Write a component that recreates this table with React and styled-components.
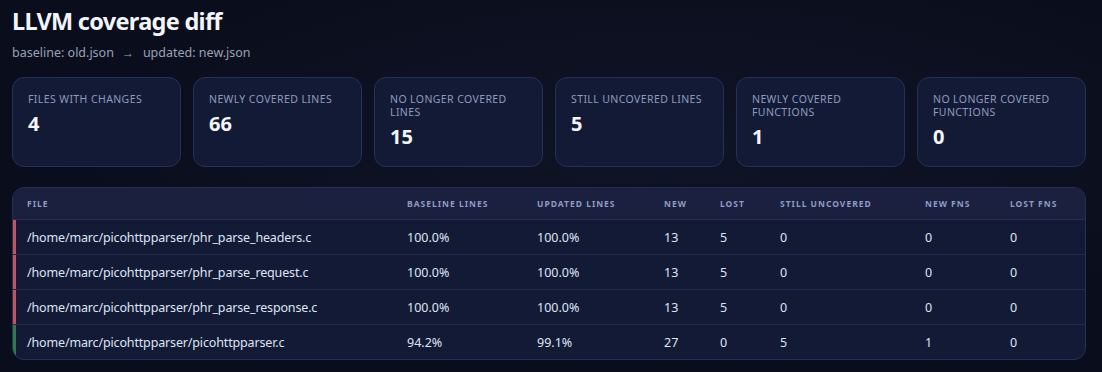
import React from 'react';
import styled, { createGlobalStyle } from 'styled-components';

const Global = createGlobalStyle`
  html, body {
    margin: 0;
    background: #0b0f1d;
  }
  body {
    font-family: 'Noto Sans', 'Open Sans', sans-serif;
    color: #e6eaf5;
  }
`;

const Page = styled.div`
  padding: 4px 16px 12px 12px;
  min-height: 372px;
  box-sizing: border-box;
  background: radial-gradient(ellipse at 60% 40%, #0f1426 0%, #0a0d1b 70%);
`;

const Title = styled.h1`
  margin: 0;
  font-size: 23.5px;
  font-weight: 700;
  letter-spacing: -0.7px;
  color: #f2f5fc;
  line-height: 34px;
`;

const Sub = styled.div`
  margin-top: 6px;
  font-size: 12.5px;
  color: #98a2b8;
  span { margin: 0 9px 0 8px; font-size: 12px; }
`;

const Cards = styled.div`
  display: grid;
  grid-template-columns: repeat(6, 1fr);
  gap: 12px;
  margin-top: 16px;
`;

const Card = styled.div`
  height: 90px;
  box-sizing: border-box;
  padding: 15px 15px 0;
  background: #131a35;
  border: 1px solid #253059;
  border-radius: 12px;
`;

const Label = styled.div`
  font-size: 10.5px;
  letter-spacing: 0.4px;
  line-height: 13px;
  text-transform: uppercase;
  color: #8d9bbf;
`;

const Value = styled.div`
  margin-top: 4px;
  font-size: 20px;
  font-weight: 700;
  color: #f4f6fc;
`;

const TableWrap = styled.div`
  margin-top: 20px;
  border: 1px solid #253059;
  border-radius: 12px;
  overflow: hidden;
  background: #131a35;
`;

const Table = styled.table`
  width: 100%;
  border-collapse: collapse;
  table-layout: fixed;
  font-size: 12.5px;
`;

const Th = styled.th`
  text-align: left;
  font-size: 8.5px;
  font-weight: 700;
  letter-spacing: 1px;
  text-transform: uppercase;
  color: #8e9cc4;
  background: #1a203e;
  height: 31px;
  padding: 0 0 0 14px;
  border-bottom: 1px solid #242d52;
`;

const Tr = styled.tr`
  border-bottom: 1px solid #232b4c;
  &:last-child { border-bottom: none; }
  td:first-child { box-shadow: inset 3px 0 0 ${p => p.$accent}; }
`;

const Td = styled.td`
  height: 34px;
  padding: 0 0 0 14px;
  color: #dfe5f3;
  white-space: nowrap;
  letter-spacing: ${p => (p.$tight ? '-0.15px' : '0')};
`;

const stats = [
  ['Files with changes', 4],
  ['Newly covered lines', 66],
  ['No longer covered lines', 15],
  ['Still uncovered lines', 5],
  ['Newly covered functions', 1],
  ['No longer covered functions', 0],
];

const cols = [
  ['File', 380],
  ['Baseline lines', 130],
  ['Updated lines', 127],
  ['New', 56],
  ['Lost', 60],
  ['Still uncovered', 145],
  ['New fns', 85],
  ['Lost fns', null],
];

const red = '#c4525f';
const green = '#2f7a4a';

const rows = [
  ['/home/marc/picohttpparser/phr_parse_headers.c', '100.0%', '100.0%', 13, 5, 0, 0, 0, red],
  ['/home/marc/picohttpparser/phr_parse_request.c', '100.0%', '100.0%', 13, 5, 0, 0, 0, red],
  ['/home/marc/picohttpparser/phr_parse_response.c', '100.0%', '100.0%', 13, 5, 0, 0, 0, red],
  ['/home/marc/picohttpparser/picohttpparser.c', '94.2%', '99.1%', 27, 0, 5, 1, 0, green],
];

const App = () => (
  <Page>
    <Global />
    <Title>LLVM coverage diff</Title>
    <Sub>baseline: old.json<span>→</span>updated: new.json</Sub>
    <Cards>
      {stats.map(([l, v]) => (
        <Card key={l}>
          <Label>{l}</Label>
          <Value>{v}</Value>
        </Card>
      ))}
    </Cards>
    <TableWrap>
      <Table>
        <colgroup>
          {cols.map(([n, w]) => <col key={n} style={w ? { width: w } : undefined} />)}
        </colgroup>
        <thead>
          <tr>{cols.map(([n]) => <Th key={n}>{n}</Th>)}</tr>
        </thead>
        <tbody>
          {rows.map(r => (
            <Tr key={r[0]} $accent={r[8]}>
              {r.slice(0, 8).map((c, i) => <Td key={i} $tight={i === 0}>{c}</Td>)}
            </Tr>
          ))}
        </tbody>
      </Table>
    </TableWrap>
  </Page>
);

export default App;
